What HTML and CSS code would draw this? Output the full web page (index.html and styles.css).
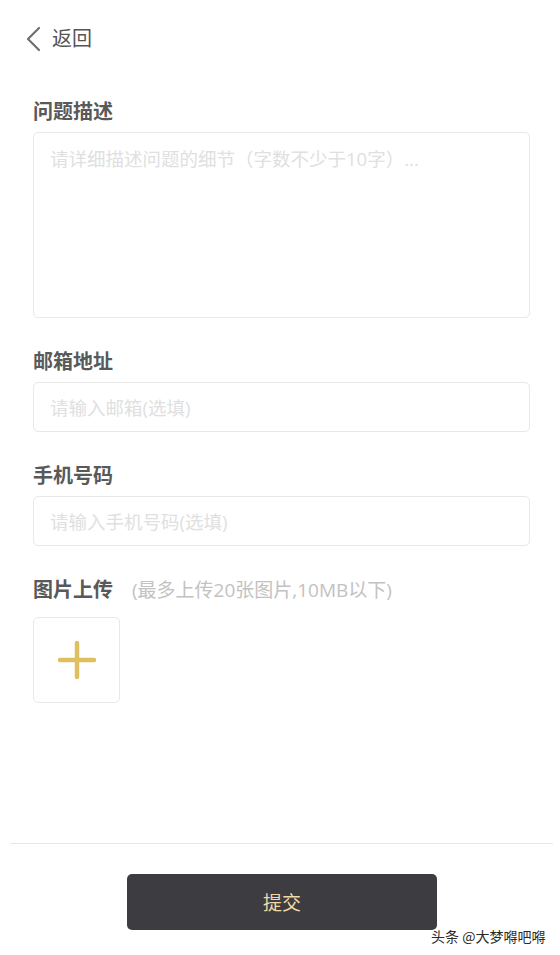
FILE: index.html
```html
<!DOCTYPE html>
<html lang="zh-CN">
<head>
<meta charset="utf-8">
<title>问题反馈</title>
<link rel="stylesheet" href="styles.css">
</head>
<body>
<div class="page">
  <header class="header">
    <a class="back">
      <svg class="back-icon" width="16" height="26" viewBox="0 0 16 26"><path d="M13 2 L2 13 L13 24" fill="none" stroke="#707070" stroke-width="2.2" stroke-linecap="round" stroke-linejoin="round"/></svg>
      <span class="back-text">返回</span>
    </a>
  </header>
  <main class="form">
    <section class="field">
      <div class="label">问题描述</div>
      <textarea class="textarea" placeholder="请详细描述问题的细节（字数不少于10字）..."></textarea>
    </section>
    <section class="field">
      <div class="label">邮箱地址</div>
      <input class="input" type="text" placeholder="请输入邮箱(选填)">
    </section>
    <section class="field">
      <div class="label">手机号码</div>
      <input class="input" type="text" placeholder="请输入手机号码(选填)">
    </section>
    <section class="field">
      <div class="label upload-label">图片上传<span class="hint">(最多上传20张图片,10MB以下)</span></div>
      <div class="upload">
        <svg width="40" height="40" viewBox="0 0 40 40"><path d="M20 3 V37 M3 20 H37" stroke="#e0bf5e" stroke-width="4.5" stroke-linecap="round"/></svg>
      </div>
    </section>
  </main>
  <footer class="footer">
    <div class="divider"></div>
    <div class="btn-row"><button class="submit">提交</button></div>
  </footer>
  <div class="watermark">头条 @大梦嘚吧嘚</div>
</div>
</body>
</html>
```
FILE: styles.css
```css
* { box-sizing: border-box; }
html, body { margin: 0; padding: 0; background: #fff; }
body {
  font-family: "Open Sans", "Noto Sans CJK SC", "Noto Sans", sans-serif;
  color: #555;
}
.page { position: relative; width: 560px; height: 955px; overflow: hidden; }
.header { height: 78px; display: flex; align-items: center; padding-left: 26px; }
.back { display: flex; align-items: center; gap: 10px; }
.back-icon { display: block; }
.back-text { font-size: 20px; color: #555; line-height: 28px; }
.form { padding: 20px 30px 0 33px; }
.field { margin-bottom: 30px; }
.label { font-size: 20px; font-weight: bold; color: #595959; line-height: 28px; margin-bottom: 6px; }
.upload-label { margin-bottom: 13px; display: flex; align-items: baseline; }
.hint { font-size: 19px; font-weight: normal; color: #c2c2c2; margin-left: 19px; }
.textarea, .input {
  display: block; width: 100%;
  border: 1px solid #e8e8e8; border-radius: 5px;
  font-family: inherit; font-size: 18.5px; color: #333;
  outline: none; background: #fff;
}
.textarea { height: 186px; padding: 13px 16px; resize: none; line-height: 26px; }
.input { height: 50px; padding: 0 16px; }
.textarea::placeholder, .input::placeholder { color: #e0e0e0; }
.upload {
  width: 87px; height: 86px; border: 1px solid #e8e8e8; border-radius: 5px;
  display: flex; align-items: center; justify-content: center;
}
.footer { margin-top: 140px; }
.divider { height: 1px; background: #e6e6e6; margin: 0 7px 0 10px; }
.btn-row { display: flex; justify-content: center; padding: 30px 0 0 4px; }
.submit {
  width: 310px; height: 56px; border: none; border-radius: 5px;
  background: #3c3c41; color: #f3d9a4; font-family: inherit; font-size: 19px;
}
.watermark {
  position: absolute; left: 431px; top: 926px;
  font-family: "Noto Sans CJK SC", sans-serif;
  font-size: 14px; color: #2a2a2a; line-height: 20px;
  text-shadow: 0 0 2px #fff, 0 0 1px #fff;
}
```
